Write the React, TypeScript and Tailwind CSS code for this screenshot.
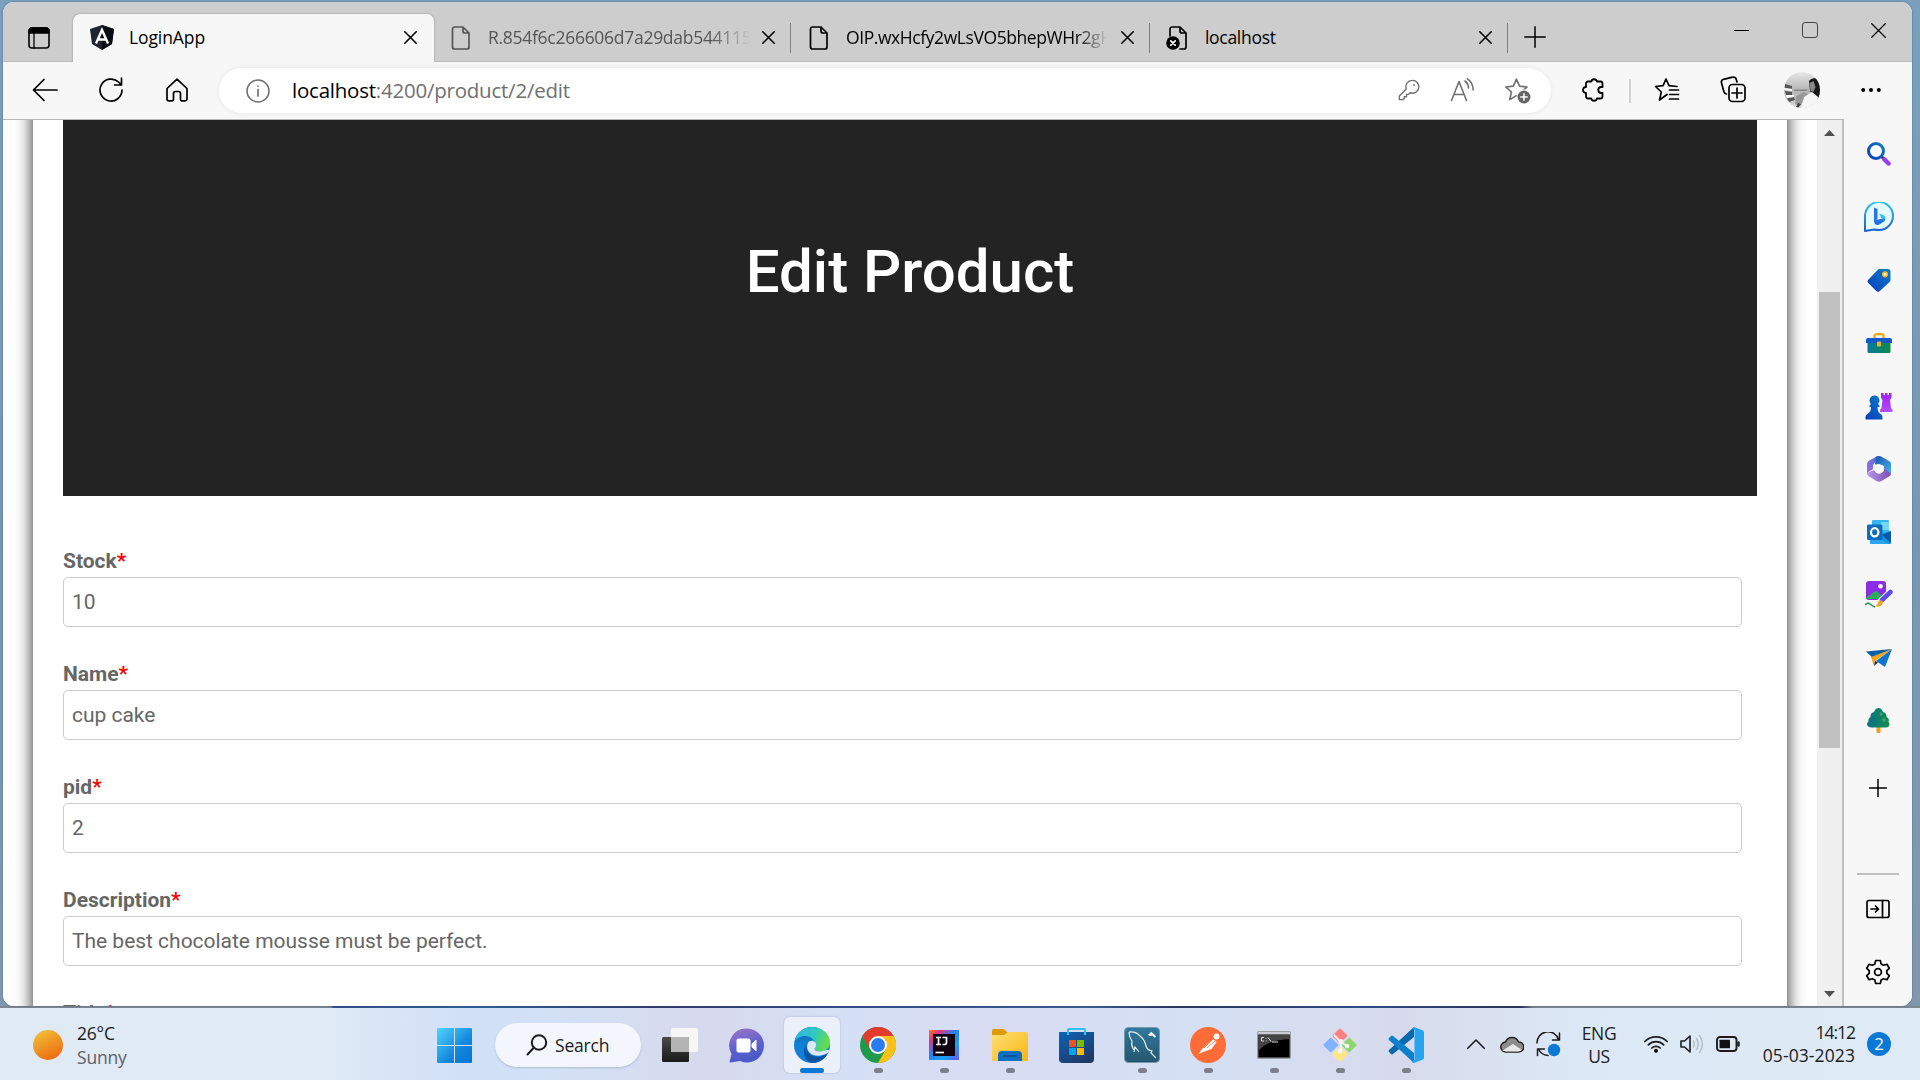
import React from "react";

type P = { children?: React.ReactNode; w?: number; h?: number; vb?: string; className?: string };

const Svg = ({ children, w = 24, h = 24, vb = "0 0 24 24", className = "" }: P) => (
  <svg width={w} height={h} viewBox={vb} className={"shrink-0 " + className} fill="none" stroke="currentColor" strokeWidth="1.5" strokeLinecap="round" strokeLinejoin="round">
    {children}
  </svg>
);

const Close = () => (
  <Svg w={13} h={13} vb="0 0 13 13"><path d="M.8.8l11.4 11.4M12.2.8L.8 12.2" strokeWidth="1.6" /></Svg>
);

const FileIcon = () => (
  <Svg w={20} h={24} vb="0 0 20 24"><path d="M3 1h9l6 6v14a2 2 0 0 1-2 2H3.500a2 2 0 0 1-2-2V3a2 2 0 0 1 2-2M12 1v4a2 2 0 0 0 2 2h4" strokeWidth="1.7" /></Svg>
);

const FileErrorIcon = () => (
  <Svg w={22} h={24} vb="0 0 22 24">
    <path d="M4 10V3a2 2 0 0 1 2-2h8l6 6v14a2 2 0 0 1-2 2h-4M14 1v4a2 2 0 0 0 2 2h4" strokeWidth="1.700" />
    <circle cx="7" cy="17" r="6.800" fill="#000" stroke="none" />
    <path d="M4.800 14.800l4.400 4.400M9.200 14.800l-4.400 4.400" stroke="#fff" strokeWidth="1.700" />
  </Svg>
);

const Angular = () => (
  <Svg w={24} h={25} vb="0 0 24 25">
    <path d="M12 0l12 4-2 15-10 6-10-6L0 4z" fill="#20242e" stroke="none" />
    <path d="M12 0l12 4-2 15-10 6z" fill="#0b0d14" stroke="none" />
    <path d="M6 18.500L12 5l6 13.500M8.500 14.500h7" stroke="#fff" strokeWidth="2.400" strokeLinecap="butt" strokeLinejoin="miter" />
  </Svg>
);

const Sep = () => <div className="h-[30px] w-px shrink-0 bg-[#808080]" />;

function Tab({ icon, title, width, textWidth, className }: { icon: React.ReactNode; title: string; width: string; textWidth: string; className: string }) {
  return (
    <div className={"flex h-[47px] items-center " + width}>
      <div className={"flex min-w-0 flex-1 items-center " + className}>
        <div className="flex w-[22px] justify-center">{icon}</div>
        <div className={"overflow-hidden whitespace-nowrap text-[17.500px] " + textWidth}>{title}</div>
      </div>
      <div className="mr-[15px]"><Close /></div>
      <Sep />
    </div>
  );
}

function TabStrip() {
  return (
    <div className="flex h-[60px] shrink-0 items-end border-b border-[#bcbcbc] bg-[#cdcdcd] text-black">
      <div className="flex h-[47px] w-[70px] items-center pl-[25px]">
        <Svg w={22} h={22} vb="0 0 22 22">
          <rect x="1" y="1" width="20" height="20" rx="3" strokeWidth="1.600" />
          <path d="M1 6V4a3 3 0 0 1 3-3h14a3 3 0 0 1 3 3v2z" fill="#000" />
          <path d="M6 6v15" strokeWidth="1.300" />
        </Svg>
      </div>
      <div className="relative top-px flex h-[48px] w-[361px] shrink-0 items-center rounded-t-[7px] bg-[#f7f7f7] pb-px pl-[17px] shadow-[0_0_2px_rgba(0,0,0,0.35)] [clip-path:inset(-3px_-3px_0px_-3px)]">
        <Angular />
        <div className="ml-[15px] flex-1 text-[17.500px] tracking-[-0.100px]">LoginApp</div>
        <div className="mr-[17px]"><Close /></div>
      </div>
      <Tab icon={<FileIcon />} title="R.854f6c266606d7a29dab544115c0" width="w-[357px]" textWidth="ml-[16px] w-[263px] tracking-[-0.280px] [mask-image:linear-gradient(90deg,#000_85%,transparent)]" className="pl-[16px] text-[#555]" />
      <Tab icon={<FileIcon />} title="OIP.wxHcfy2wLsVO5bhepWHr2gHaE" width="w-[359px]" textWidth="ml-[16px] w-[262px] tracking-[-0.420px] [mask-image:linear-gradient(90deg,#000_88%,transparent)]" className="pl-[17px] text-black" />
      <Tab icon={<FileErrorIcon />} title="localhost" width="w-[358px]" textWidth="ml-[17px] w-[262px] tracking-[-0.300px]" className="pl-[16px] text-black" />
      <div className="flex h-[48px] w-[54px] items-center justify-center">
        <Svg w={22} h={22} vb="0 0 22 22"><path d="M11 .8v20.400M.8 11h20.400" /></Svg>
      </div>
      <div className="flex-1" />
      <div className="flex h-[60px] pb-[2px]">
        <div className="flex w-[68px] items-center justify-center pr-[2px]"><div className="h-px w-[15px] bg-black" /></div>
        <div className="flex w-[68px] items-center justify-center pr-px"><div className="h-4 w-4 rounded-[3px] border-[1.500px] border-[#444]" /></div>
        <div className="flex w-[68px] items-center justify-center"><Svg w={15} h={15} vb="0 0 15 15"><path d="M.5.5l14 14M14.500.5l-14 14" strokeWidth="1.100" /></Svg></div>
      </div>
    </div>
  );
}

const cell = "flex w-[66px] shrink-0 items-center justify-center pb-[2px]";
const cellSm = "flex w-[54px] shrink-0 items-center justify-center pb-px";
const star = "M11.500 2l2.900 6.500 7 .7-5.300 4.700 1.600 7-6.200-3.700-6.200 3.700 1.600-7-5.300-4.700 7-.7z";

function Toolbar() {
  return (
    <div className="flex h-[57px] shrink-0 items-stretch bg-[#f7f7f7] pl-[9px] text-black">
      <div className={cell}><Svg w={26} h={24} vb="0 0 26 24"><path d="M25 12H1.500M12 1.500L1.500 12 12 22.500" strokeWidth="1.700" /></Svg></div>
      <div className={cell}><Svg w={26} h={26} vb="0 0 26 26"><path d="M24 13A11 11 0 1 1 20.500 5L23 7.500M23.500 1v7h-7" strokeWidth="1.700" /></Svg></div>
      <div className={cell}><Svg w={24} h={24} vb="0 0 24 24"><path d="M12 1.200L2 10.500V21a1.800 1.800 0 0 0 1.800 1.800h3.400A1.300 1.300 0 0 0 8.500 21.500v-6a2 2 0 0 1 2-2h3a2 2 0 0 1 2 2v6a1.300 1.300 0 0 0 1.300 1.300h3.400A1.800 1.800 0 0 0 22 21V10.500z" strokeWidth="1.700" /></Svg></div>
      <div className="my-auto ml-[9px] flex h-[45px] w-[1332px] shrink-0 items-center rounded-full bg-white pr-[7px] pl-[27px] text-[#707070] shadow-[0_0_5px_rgba(0,0,0,0.08)]">
        <Svg w={24} h={24}><circle cx="12" cy="12" r="11" strokeWidth="1.500" /><path d="M12 10.500V17M12 7v.200" strokeWidth="1.700" /></Svg>
        <div className="ml-[22px] flex-1 text-[20.500px] tracking-[-0.230px]"><span className="text-black">localhost</span>:4200/product/2/edit</div>
        <div className={cellSm}><Svg w={22} h={22}><path d="M15.500 1.500a7 7 0 1 1-2.300 13.500l-1.700 1.800h-2.200v2.500H6.800v2L5.500 22.500H1.500V18.500L9 10.800A7 7 0 0 1 15.500 1.500z" /><circle cx="17.500" cy="6.500" r="1" fill="currentColor" stroke="none" /></Svg></div>
        <div className={cellSm}><Svg w={26} h={24} vb="0 0 26 24"><path d="M1.500 22.500L9 3.500l7.500 19M4 16.500h10M15 3c2.300 1.800 3.400 4 3.500 7M17.500.8c3.500 2.500 5.600 6.500 5.700 11.200" strokeWidth="1.600" /></Svg></div>
        <div className={cellSm}><Svg w={27} h={27} vb="0 0 25 25"><path d={star} /><circle cx="18.500" cy="18.500" r="7" fill="#fff" stroke="none" /><circle cx="18.500" cy="18.500" r="6" fill="#666" stroke="none" /><path d="M18.500 15.500v6M15.500 18.500h6" stroke="#fff" strokeWidth="1.400" /></Svg></div>
      </div>
      <div className={cell + " ml-[9px]"}><Svg w={25} h={26} vb="0 0 25 26"><path d="M7 4.500h3.200a3 3 0 0 1 5.800 0h3.500a2 2 0 0 1 2 2V10h-1.200a3 3 0 0 0 0 6h1.200v3.500a2 2 0 0 1-2 2H16a3 3 0 0 1-5.800 0H7a2 2 0 0 1-2-2V16a3 3 0 0 1 0-6V6.500a2 2 0 0 1 2-2z" strokeWidth="1.800" /></Svg></div>
      <div className="my-auto ml-[3px] h-6 w-[2px] bg-[#d0d0d0]" />
      <div className={cell + " ml-[3px]"}><Svg w={26} h={26} vb="0 0 26 26"><path d="M13 17.500L5.500 23l1.800-8L1.500 9.500l7.600-.8L12 2l3 6.700 8 .8M15.500 13h9M15.500 17.500h9M15.500 22h9" strokeWidth="1.700" /></Svg></div>
      <div className={cell}><Svg w={26} h={27} vb="0 0 26 27"><path d="M6.500 18A3 3 0 0 1 4 16L1.500 7A3 3 0 0 1 3.500 3.300l9-2.100A3 3 0 0 1 16.300 3.500L17 6" strokeWidth="1.700" /><rect x="9" y="8.500" width="16" height="17" rx="3.500" strokeWidth="1.700" /><path d="M17 12v10M12 17h10" strokeWidth="1.700" /></Svg></div>
      <div className={cell + " ml-[3px]"}>
        <svg width="36" height="36" viewBox="0 0 36 36">
          <defs><clipPath id="av"><circle cx="18" cy="18" r="18" /></clipPath><linearGradient id="avg" x2="0" y2="1"><stop stopColor="#e8e8e8" /><stop offset=".5" stopColor="#b4b4b4" /><stop offset="1" stopColor="#d8d8d8" /></linearGradient></defs>
          <g clipPath="url(#av)">
            <rect width="36" height="36" fill="url(#avg)" />
            <path d="M1 12l7 2v3l-7-1zM1 19l7 1v3l-6 0zM3 26l7-1 1 3-6 2z" fill="#555" />
            <path d="M0 16l8 1v2l-8-1zM2 23l8 0v2l-7 1z" fill="#fff" />
            <path d="M10 17.500h13V19H10z" fill="#888" />
            <path d="M12 24l8-4 4 2-8 12-5-2z" fill="#999" />
            <path d="M25 9c4-5 10-3 11 3v15h-4l-6-8z" fill="#181818" />
            <path d="M25.500 11l4-2 2 6-2 5-3-1z" fill="#888" />
            <path d="M17 36l3-11 8-5 6 5 1 11z" fill="#f6f6f6" />
            <path d="M14 31l3 1-3 4-2-1z" fill="#444" />
          </g>
        </svg>
      </div>
      <div className={cell + " ml-[3px]"}><Svg w={20} h={6} vb="0 0 20 6"><g fill="#000" stroke="none"><circle cx="2.200" cy="3" r="2" /><circle cx="10" cy="3" r="2" /><circle cx="17.800" cy="3" r="2" /></g></Svg></div>
    </div>
  );
}

const fields: [string, string | null][] = [
  ["Stock", "10"],
  ["Name", "cup cake"],
  ["pid", "2"],
  ["Description", "The best chocolate mousse must be perfect."],
  ["Title", null],
];

function Page() {
  return (
    <div className="h-full w-[1814px] shrink-0 overflow-hidden bg-white px-[30px] font-['Roboto',sans-serif]">
      <div className="-mt-10 h-[1000px] bg-white px-[30px] pt-10 shadow-[0_0_16px_rgba(0,0,0,0.850)]">
        <div className="flex h-[376px] w-[1694px] justify-center bg-[#232323] pt-[116px]">
          <h1 className="text-[60px] leading-[72px] font-medium text-white">Edit Product</h1>
        </div>
        <form className="mt-[53px] w-[1679px] text-[21px] text-[#666]">
          {fields.map(([label, value]) => (
            <div key={label} className="mb-[35px]">
              <label className="block h-[28px] leading-6 font-bold">{label}<span className="text-[#f00]">*</span></label>
              {value !== null && <div className="flex h-[50px] items-center rounded-[5px] border border-[#ccc] bg-white px-[8px] pt-[2px] tracking-[-0.020px]">{value}</div>}
            </div>
          ))}
        </form>
      </div>
    </div>
  );
}

function Scrollbar() {
  return (
    <div className="flex w-[27px] shrink-0 flex-col items-center border-r-2 border-[#bfbfbf] bg-[#f0f0f0]">
      <svg width="11" height="6" viewBox="0 0 11 6" className="mt-[10px]"><path d="M0 6L5.500 0 11 6z" fill="#505050" /></svg>
      <div className="mt-[156px] h-[456px] w-[21px] bg-[#c1c1c1]" />
      <div className="flex-1" />
      <svg width="11" height="6" viewBox="0 0 11 6" className="mb-[9px]"><path d="M0 0L5.500 6 11 0z" fill="#505050" /></svg>
    </div>
  );
}

const Defs = () => (
  <svg width="0" height="0" className="absolute">
    <defs>
      <linearGradient id="cy" x1="0" y1="0" x2="0" y2="1"><stop stopColor="#2fc4e6" /><stop offset="1" stopColor="#1d5fd0" /></linearGradient>
      <linearGradient id="tagc" x1="0" y1="1" x2="1" y2="0"><stop stopColor="#0a3fb8" /><stop offset=".6" stopColor="#0b62c4" /><stop offset="1" stopColor="#1480b8" /></linearGradient>
      <linearGradient id="pur" x1="0" y1="0" x2="0" y2="1"><stop stopColor="#a020f5" /><stop offset="1" stopColor="#b050f8" /></linearGradient>
      <linearGradient id="box" x1="0" y1="0" x2="1" y2="0"><stop stopColor="#08789a" /><stop offset="1" stopColor="#0d8a4a" /></linearGradient>
      <linearGradient id="tree" x1="0" y1="0" x2="1" y2="0"><stop stopColor="#08708a" /><stop offset="1" stopColor="#14904a" /></linearGradient>
      <linearGradient id="m1" x1="0" y1="1" x2="1" y2="0"><stop stopColor="#a070dc" /><stop offset="1" stopColor="#4a70d8" /></linearGradient>
      <linearGradient id="m2" x1="0" y1="0" x2="1" y2="1"><stop stopColor="#1c4fb0" /><stop offset="1" stopColor="#40b8e8" /></linearGradient>
      <linearGradient id="m3" x1="0" y1="0" x2="1" y2="0"><stop stopColor="#b898e8" /><stop offset="1" stopColor="#7a4cb0" /></linearGradient>
      <linearGradient id="sun" x1=".2" y1="0" x2=".7" y2="1"><stop stopColor="#f0c038" /><stop offset="1" stopColor="#ee6a10" /></linearGradient>
      <linearGradient id="win" gradientUnits="userSpaceOnUse" x1="0" y1="0" x2="35" y2="35"><stop stopColor="#50d5ff" /><stop offset=".6" stopColor="#1488dc" /><stop offset="1" stopColor="#0074d4" /></linearGradient>
      <linearGradient id="chat" x1=".2" y1="0" x2=".5" y2="1"><stop stopColor="#9a74c8" /><stop offset=".6" stopColor="#5a60cc" /><stop offset="1" stopColor="#4a58c8" /></linearGradient>
      <linearGradient id="e1" x1="0" y1="0" x2="1" y2=".3"><stop stopColor="#2fb4e8" /><stop offset=".6" stopColor="#30c8c0" /><stop offset="1" stopColor="#62dc50" /></linearGradient>
      <linearGradient id="e2" x1="0" y1="0" x2="0" y2="1"><stop stopColor="#1468a8" /><stop offset=".5" stopColor="#0f80d8" /><stop offset="1" stopColor="#1280d8" /></linearGradient>
      <linearGradient id="ij" x1="0" y1="0" x2="1" y2="1"><stop stopColor="#f97a12" /><stop offset=".2" stopColor="#e0358c" /><stop offset=".45" stopColor="#2a80f0" /><stop offset=".7" stopColor="#18a0f5" /><stop offset="1" stopColor="#6a55f0" /></linearGradient>
      <linearGradient id="fold" x1="0" y1="0" x2="1" y2="1"><stop stopColor="#ffe078" /><stop offset="1" stopColor="#f8b510" /></linearGradient>
      <linearGradient id="store" x1="0" y1="0" x2=".6" y2="1"><stop stopColor="#0a66b8" /><stop offset="1" stopColor="#203a68" /></linearGradient>
      <linearGradient id="sql" x1="0" y1="0" x2="0" y2="1"><stop stopColor="#3278a0" /><stop offset="1" stopColor="#24566e" /></linearGradient>
      <linearGradient id="dark" x1="0" y1="0" x2="0" y2="1"><stop stopColor="#4a4a4a" /><stop offset="1" stopColor="#1a1a1a" /></linearGradient>
    </defs>
  </svg>
);

const Pic = ({ w, h, vb, children }: P) => <svg width={w} height={h} viewBox={vb || `0 0 ${w} ${h}`} className="shrink-0">{children}</svg>;

const sideIcons = [
  <Pic w={24} h={24}><path d="M15 15l3 3" stroke="#333" strokeWidth="3" /><path d="M17.500 17.500l4 4" stroke="#9a3cf0" strokeWidth="4.500" strokeLinecap="round" /><circle cx="9" cy="9" r="7.500" fill="#f7fbff" stroke="url(#tagc)" strokeWidth="3" /></Pic>,
  <Pic w={30} h={30}><path d="M1 29V15A14 14 0 1 1 15 28q-2.500 0-5-.5z" fill="#e4faff" stroke="url(#cy)" strokeWidth="2" strokeLinejoin="round" /><path d="M10 5.500l3.500 1.500v10L10 20z" fill="#2a74e8" /><path d="M10 18.500l4.500-1 6-1.500q1.500 2-.5 3.500L14.500 23q-4.500.5-4.500-4.500z" fill="#2470e4" /><path d="M15 11.500l5 2q2 1 1.500 3.500L18 17.500z" fill="#38bdf0" /></Pic>,
  <Pic w={24} h={24}><path d="M12.500 1H21q2.500 0 2.500 2.500V12q0 1-.7 1.700L12.500 23.200q-1.500 1.200-3 0L1.300 15q-1.500-1.500 0-3.200L10.800 1.700q.7-.7 1.700-.7z" fill="url(#tagc)" /><circle cx="18" cy="6.300" r="2.300" fill="#fff" stroke="#f3b51b" strokeWidth="1.600" /></Pic>,
  <Pic w={26} h={20} vb="0 1.500 26 20"><path d="M8.500 7V4.700q0-2 2-2h5q2 0 2 2V7" fill="none" stroke="#efa91c" strokeWidth="2.300" /><rect x="1.500" y="10" width="23" height="11.500" rx="1.500" fill="url(#box)" /><path d="M0 11.500V8.500q0-2 2-2h22q2 0 2 2v3z" fill="#1558cc" /><rect x="11" y="10" width="4" height="5" rx=".8" fill="#f3b51b" /></Pic>,
  <Pic w={28} h={28}><path d="M16 1h2.500v2H20V1h2.500v2H24V1h2.500v5L25 8l1 8 1.500 2v2H15v-2l1.500-2 1-8-1.500-2z" fill="url(#pur)" /><path d="M9.500 3.500a5 5 0 0 1 3.500 8.500l1.500 1.500v1.500h-2q0 5 2.500 6.500 2.500 1 2.500 3.500v2.500H.5V25q0-2.500 2.500-3.500 3-1.500 3-6.500H4.500v-1.500L6 12A5 5 0 0 1 9.500 3.500z" fill="url(#tagc)" /></Pic>,
  <Pic w={24} h={26}><path d="M0 17l6-4V9l4-4.500L12 0q-2 0-3 .7L2 4.700Q0 6 0 8z" fill="url(#m1)" /><path d="M8 8.500L9 1q3-2 6 0l7 4q2 1.200 2 3v9.500L17 13V10l-5-2z" fill="url(#m2)" /><path d="M0 17l7-3 4 3.500h2L17 15V12l7 5.500q0 2-2 3L14.500 25q-2.500 1.500-5 0L2 20.500Q0 19.500 0 17z" fill="url(#m3)" /><circle cx="12" cy="13" r="4.500" fill="#f7f7f7" /></Pic>,
  <Pic w={24} h={24}><path d="M5 1q0-1 1-1h15q1 0 1 1v15H5z" fill="#34b6f0" /><path d="M14 2h8v8h-8z" fill="#72d8fa" /><path d="M3 11l11 3 10-3v12q0 1-1 1H4q-1 0-1-1z" fill="#1490df" /><path d="M15 15l9-4v12z" fill="#0a5aa8" /><path d="M3 15l20 9H4q-1 0-1-1z" fill="#28a8ea" /><rect x="0" y="4.500" width="15.500" height="15.500" rx="1.500" fill="#0d6cc0" /><ellipse cx="7.700" cy="12.300" rx="3.700" ry="4.100" fill="none" stroke="#fff" strokeWidth="2.200" /></Pic>,
  <Pic w={28} h={27}><rect x="1" y="0" width="20" height="19" rx="3" fill="#8c2de6" /><circle cx="15.500" cy="5.300" r="2.300" fill="#fff" /><path d="M1 17l8-6q2-1.500 4 0l6 7H4q-3 1-3-1z" fill="#2cab5c" /><path d="M25.500 11L16 20" stroke="#f7f7f7" strokeWidth="7" strokeLinecap="round" /><path d="M25.500 11L17 19" stroke="#5a4ae8" strokeWidth="4.500" strokeLinecap="round" /><path d="M17.500 20q1 4-3 5.500H10q2.500-1.500 3-4.500 2-3 4.500-1z" fill="#f2a422" /><path d="M0 24q3-3 5-1t5 3" fill="none" stroke="#2c9a5c" strokeWidth="1.700" /></Pic>,
  <Pic w={26} h={20}><path d="M0 3.500L26 1 8 11z" fill="#0a5fa8" /><path d="M5 9L26 1 9 13 8 18z" fill="#f2a51a" /><path d="M26 1l-7 18-9-6z" fill="#0f74cc" /><path d="M9 13l3 1.500L8 18z" fill="#2a2040" /></Pic>,
  <Pic w={24} h={26}><path d="M9.500 18h4v6q0 1-1 1h-2q-1 0-1-1z" fill="#f0a020" /><path d="M11.500 0q3 0 4.500 4 4 1 3.500 5 3.500 2 2 5 2 2 .5 4-1 1.500-3 1.500H4.500q-3.500 0-4.500-3 0-2 1.500-3-.5-3 2-4.500Q3 5 7 4q1.500-4 4.500-4z" fill="url(#tree)" /><circle cx="14" cy="6" r="1.500" fill="#49a070" /><circle cx="17" cy="12" r="1.800" fill="#49a070" /></Pic>,
];

function Sidebar() {
  return (
    <div className="flex flex-1 flex-col items-center bg-[#f7f7f7] pt-[3px] pl-[2px] text-black">
      {sideIcons.map((ic, i) => (
        <div key={i} className="flex h-[63px] shrink-0 items-center justify-center">{ic}</div>
      ))}
      <div className="mt-[14px] mr-[3px]"><Svg w={18} h={44} vb="0 0 18 44"><path d="M9 13.500v17M.500 22h17" /></Svg></div>
      <div className="mt-[63px] mr-[2px] h-[2px] w-[42px] bg-[#c0c0c0]" />
      <div className="mt-[24px] mr-[2px]"><Svg w={24} h={20} vb="0 0 24 20"><rect x="1" y="1.500" width="22" height="17" rx="2" strokeWidth="1.700" /><path d="M16.500 1.500v17M5 10h7.500M9.500 7l3 3-3 3" strokeWidth="1.700" /></Svg></div>
      <div className="mt-[40px] mr-[2px]"><Svg w={26} h={26} vb="0 0 26 26"><path d="M10.700 1.500h4.600l.8 3.400 2.500 1.400 3.300-1 2.400 4-2.500 2.400v2.600l2.500 2.400-2.400 4-3.300-1-2.500 1.400-.8 3.400h-4.600l-.8-3.400-2.500-1.400-3.300 1-2.400-4 2.500-2.400v-2.600L1.700 9.300l2.400-4 3.300 1 2.500-1.400z" strokeWidth="1.700" /><circle cx="13" cy="13" r="3.400" strokeWidth="1.700" /></Svg></div>
    </div>
  );
}

const apps: { icon: React.ReactNode; run: boolean; active?: boolean }[] = [
  { run: false, icon: <Pic w={36} h={34}><rect x="0" y="9" width="27" height="25" rx="1.500" fill="url(#dark)" /><rect x="9" y="0" width="27" height="24" rx="1.500" fill="#f6f6f6" /><path d="M9 9h18v15H10.500Q9 24 9 22.500z" fill="#b4b4b4" /></Pic> },
  { run: false, icon: <Pic w={35} h={35}><path d="M18 .5a17 17 0 1 1-7 32.500L1.500 34.500Q0 34.500.7 33L2.500 26A17 17 0 0 1 18 .5z" fill="url(#chat)" /><rect x="7.500" y="10.500" width="14" height="14" rx="2" fill="#fff" /><path d="M23 16l4-4v11l-4-4z" fill="#fff" stroke="#fff" strokeLinejoin="round" /></Pic> },
  { run: true, active: true, icon: <Pic w={36} h={36}><circle cx="18" cy="18" r="18" fill="url(#e2)" /><path d="M.5 15C2 6 9 0 18 0c10 0 18 7 18 15 0 6-4 9.500-9 9.500-4 0-7-1.500-6.500-3 2-1.500 2-4 1-6C19 11 15 9 11 9 6 9 2 11.500.5 15z" fill="url(#e1)" /><path d="M13 15.500c-4 7 1 16 10 15.500 4 0 8-1.500 10-3.500C30 33 24 36 18 36 11 34 8 26 11 19z" fill="#0c54a0" /><path d="M20.500 21.500c2-1.500 2-4 1-6-2.500-3-7-1.500-8 1.500-2.500 8 6 13 13 11.500 3-.5 5-1.500 7-2.500L36 23l-4 0c-4 2.500-12 1.500-11.500-1.500z" fill="#e9eef8" opacity=".95" /><path d="M13.500 17c-2.500 8 3.500 14 12 12.500 4-.5 6-2 7.500-2.500-2 4-8 7-14 7-6-3-8-11-5.500-17z" fill="#0c54a0" /></Pic> },
  { run: true, icon: <Pic w={36} h={36}><circle cx="18" cy="18" r="18" fill="#1f9a4a" /><path d="M2.400 9A18 18 0 0 1 33.600 9H18L10.200 22.500z" fill="#e33b2e" /><path d="M33.600 9A18 18 0 0 1 18 36l7.800-13.500L26 13l-8-4z" fill="#fbc116" /><circle cx="18" cy="18" r="9" fill="#fff" /><circle cx="18" cy="18" r="7" fill="#2b7bf0" /></Pic> },
  { run: true, icon: <Pic w={30} h={30}><rect width="30" height="30" fill="url(#ij)" /><rect x="4" y="4" width="22" height="22" fill="#120310" /><path d="M7 7.500h5M9.500 7.500v7M7 14.500h5M13.500 7.500h4v5q0 2-2.300 2h-1.700" fill="none" stroke="#fff" strokeWidth="1.700" /><path d="M6.500 22.500H15" stroke="#fff" strokeWidth="1.600" /></Pic> },
  { run: true, icon: <Pic w={36} h={32}><path d="M0 1.500Q0 0 1.500 0h9q1.500 0 2.500 1l2 2h19v10H0z" fill="#dd9c08" /><path d="M0 6h12l4-3h18.500Q36 3 36 4.500v26q0 1.500-1.500 1.500h-33Q0 32 0 30.500z" fill="url(#fold)" /><path d="M6 32v-6q0-4 4-4h16q4 0 4 4v6z" fill="#0d6fc0" /><path d="M11 27h14" stroke="#0a4a90" strokeWidth="1.500" /></Pic> },
  { run: false, icon: <Pic w={35} h={35}><path d="M0 4h35v27q0 4-4 4H4q-4 0-4-4z" fill="url(#store)" /><path d="M9 7V1.500Q9 1 9.500 1h16q.5 0 .5.500V7" fill="none" stroke="#38c0f5" strokeWidth="2" /><path d="M10 12h7v7h-7z" fill="#f25022" /><path d="M18 12h7v7h-7z" fill="#7fba00" /><path d="M10 20h7v7h-7z" fill="#00a4ef" /><path d="M18 20h7v7h-7z" fill="#ffb900" /></Pic> },
  { run: true, icon: <Pic w={36} h={36}><rect x=".5" y=".5" width="35" height="35" rx="4" fill="url(#sql)" stroke="#7398a8" /><path d="M5 5q7-1 11 4 5 4 6 10 1 4 6 5l-1 2 5 5M5 5q0 5 3 9-1 5 2 9l1-3 4 5M11 20l-1 5" fill="none" stroke="#e8f0f4" strokeWidth="1.200" /><path d="M26.500 5.500l5 4.500M25 7q1.500 2 3.500-.5" stroke="#fff" strokeWidth="2.200" fill="none" /></Pic> },
  { run: true, icon: <Pic w={36} h={36}><circle cx="18" cy="18" r="18" fill="#ff6c37" /><circle cx="26.500" cy="9.500" r="3" fill="#fff" /><path d="M23 12l3.500 3-5 7-10 3.500-3 2 3-5z" fill="#fff" /><path d="M14 21l9-9M17 21l8-7" stroke="#ff6c37" strokeWidth=".8" /></Pic> },
  { run: true, icon: <Pic w={34} h={28}><rect x=".7" y=".7" width="32.600" height="26.600" rx="1" fill="#000" stroke="#9a9da3" strokeWidth="1.400" /><path d="M1 1h32v2.500H1z" fill="#c9ccd2" /><path d="M2 4h30v4Q12 9 2 19z" fill="#444" /><path d="M7 6.500H4.500v3.500H7M9 7v.800M9 9.500v.800M11 6.500l3 4M15 11h6" stroke="#ddd" fill="none" /></Pic> },
  { run: true, icon: <Pic w={36} h={36}><g transform="rotate(45 18 18)"><rect x="6" y="6" width="11" height="11" rx="1" fill="#ff8080" /><rect x="19" y="6" width="11" height="11" rx="1" fill="#8cd866" /><rect x="6" y="19" width="11" height="11" rx="1" fill="#7fb2ff" /><rect x="19" y="19" width="11" height="11" rx="1" fill="#ffe680" /></g><path d="M12 8l7 7v8M19 15l6 4" stroke="#f2f2fa" strokeWidth="1.800" fill="none" /><circle cx="19" cy="14.500" r="2.500" fill="#f2f2fa" /><circle cx="18" cy="24" r="2.500" fill="#f2f2fa" /><circle cx="25" cy="19" r="2.300" fill="#f2f2fa" /></Pic> },
  { run: true, icon: <Pic w={36} h={36}><path d="M26 0v10L5 27q-1 .8-2 0l-2-2q-1-1 0-2z" fill="#0868ac" /><path d="M26 36V26L5 9q-1-.8-2 0l-2 2q-1 1 0 2z" fill="#0b80cc" /><path d="M26 0l9 3.500q1 .5 1 1.500v26q0 1-1 1.500L26 36q-1.500 0-2-1l2.500-2V3L24 1.500z" fill="#26a4f0" /></Pic> },
];

function Taskbar() {
  return (
    <div className="flex h-[72px] shrink-0 items-center bg-[linear-gradient(90deg,#dfeaf5_0%,#dfeaf6_17%,#d2e0f7_24%,#d3e1f5_29%,#d7d9ec_37%,#d5e0f5_43%,#d8dcf2_52%,#d5e0f4_62%,#d7daec_73%,#dce8f5_82%,#deeaf5_100%)] pt-[2px] text-[#1c1c1c]">
      <div className="flex w-[437px] items-center pl-[33px]">
        <Pic w={30} h={30}><circle cx="15" cy="15" r="15" fill="url(#sun)" /></Pic>
        <div className="ml-[14px] text-[17.500px] leading-[24px] tracking-[-0.200px]">
          <div>26°C</div>
          <div className="text-[#5c6066]">Sunny</div>
        </div>
      </div>
      <Pic w={35} h={35}><g fill="url(#win)"><path d="M1 0h16v17H0V1q0-1 1-1zM18 0h16q1 0 1 1v16H18zM0 18h17v17H1q-1 0-1-1zM18 18h17v16q0 1-1 1H18z" /></g></Pic>
      <div className="ml-[23px] flex h-[44px] w-[146px] items-center rounded-full bg-[#f3f6fc] pl-[31px] shadow-[0_1px_2px_rgba(60,80,140,0.250)]">
        <Svg w={22} h={22} vb="0 0 22 22"><circle cx="13" cy="8.500" r="7.200" strokeWidth="2" /><path d="M8 13.500L1.500 20.500" strokeWidth="2" /></Svg>
        <div className="ml-[7px] text-[17.500px] tracking-[-0.200px]">Search</div>
      </div>
      <div className="ml-[6px] flex">
        {apps.map((a, i) => (
          <div key={i} className="flex h-[70px] w-[66px] items-center justify-center">
            <div className={a.active ? "relative flex h-[56px] w-[56px] items-center justify-center rounded-[6px] bg-[#ebf0fa] shadow-[0_0_2px_rgba(60,80,140,0.350)]" : "relative flex h-[56px] w-[56px] items-center justify-center"}>
              {a.icon}
              {a.run && <div className={a.active ? "absolute bottom-0 h-[5px] w-6 rounded-full bg-[#0a78d4]" : "absolute bottom-0 h-[5px] w-[9px] rounded-full bg-[#7c808c]"} />}
            </div>
          </div>
        ))}
      </div>
      <div className="ml-[28px] flex flex-1 items-center">
        <Svg w={18} h={10} vb="0 0 18 10" className="-mt-[2px]"><path d="M.8 9.200L9 1l8.200 8.200" strokeWidth="1.600" /></Svg>
        <Svg w={24} h={17} vb="0 0 24 17" className="-mt-[2px] ml-[15px]"><path d="M6 16a5 5 0 0 1-.5-10A7 7 0 0 1 18.500 6 5 5 0 0 1 19 16z" fill="#8d8d8d" stroke="#222" /><path d="M2.500 14.500L13 8l9 6-3 1.500H6z" fill="#e8e8e8" stroke="none" /></Svg>
        <Svg w={25} h={25} vb="0 0 25 25" className="-mt-[2px] ml-[12px]"><path d="M1 11A11 11 0 0 1 22.500 7.500M23.500 1v7h-7M12 23.500A11 11 0 0 1 2.500 17M1.500 23.500v-6.500h7" strokeWidth="1.500" /><circle cx="18" cy="18" r="6.200" fill="#0a78d4" stroke="none" /></Svg>
        <div className="ml-[18px] w-[40px] text-center text-[17.500px] leading-[23px] tracking-[-0.400px]"><div>ENG</div><div>US</div></div>
        <Svg w={24} h={18} vb="0 0 24 18" className="-mt-[2px] ml-[25px]"><path d="M.8 6.500a16 16 0 0 1 22.400 0M4.300 9.800a11 11 0 0 1 15.400 0M7.800 13a6 6 0 0 1 8.400 0" strokeWidth="1.700" /><circle cx="12" cy="15.800" r="2" fill="#000" stroke="none" /></Svg>
        <Svg w={24} h={20} vb="0 0 24 20" className="-mt-[2px] ml-[12px]"><path d="M1 7v6h3.500l5.500 5V2L4.500 7z" strokeWidth="1.600" /><path d="M13.500 7q1.500 3 0 6M16.500 4.500q3.500 5.500 0 11M19.500 1.500q6 8.500 0 17" stroke="#b4bcc8" /></Svg>
        <Svg w={24} h={16} vb="0 0 24 16" className="-mt-[2px] ml-[12px]"><rect x="1" y="1" width="19.500" height="14" rx="3" strokeWidth="1.900" /><rect x="3.500" y="3.800" width="10.500" height="8.400" rx=".5" fill="#111" stroke="none" /><path d="M22.500 6.500v3" strokeWidth="2.500" /></Svg>
        <div className="-mt-[2px] ml-auto text-right text-[17.500px] leading-[23px]"><div className="tracking-[-1px]">14:12</div><div className="tracking-[0.100px]">05-03-2023</div></div>
        <div className="-mt-[2px] mr-[29px] ml-[12px] flex h-6 w-6 items-center justify-center rounded-full bg-[#0a78d4] text-[17px] leading-6 text-white">2</div>
      </div>
    </div>
  );
}

export default function App() {
  return (
    <div className="flex h-[1080px] w-[1920px] flex-col overflow-hidden bg-[linear-gradient(180deg,#7aa0bd,#7698b4_50%,#8298ae)] font-['Open_Sans','Noto_Sans',sans-serif]">
      <Defs />
      <div className="flex h-[1008px] shrink-0 flex-col bg-[linear-gradient(90deg,#7d8894_0,#7d8894_330px,#33518c_334px,#2c6298_480px,#343c70_660px,#33508c_850px,#3a5f92_1090px,#2c3560_1180px,#30508c_1360px,#2c3358_1520px,#7d8894_1534px)] bg-[length:100%_2px] bg-bottom bg-no-repeat pt-[2px]">
        <div className="ml-[3px] flex h-[1004px] w-[1909px] flex-col overflow-hidden rounded-[11px] bg-[#f7f7f7] shadow-[0_0_2px_rgba(40,60,80,0.600)]">
          <TabStrip />
          <Toolbar />
          <div className="flex min-h-0 flex-1">
            <div className="flex flex-col border-t border-[#b8b8b8]"><Page /></div>
            <div className="flex border-t border-[#b8b8b8]"><Scrollbar /></div>
            <Sidebar />
          </div>
        </div>
      </div>
      <Taskbar />
    </div>
  );
}
